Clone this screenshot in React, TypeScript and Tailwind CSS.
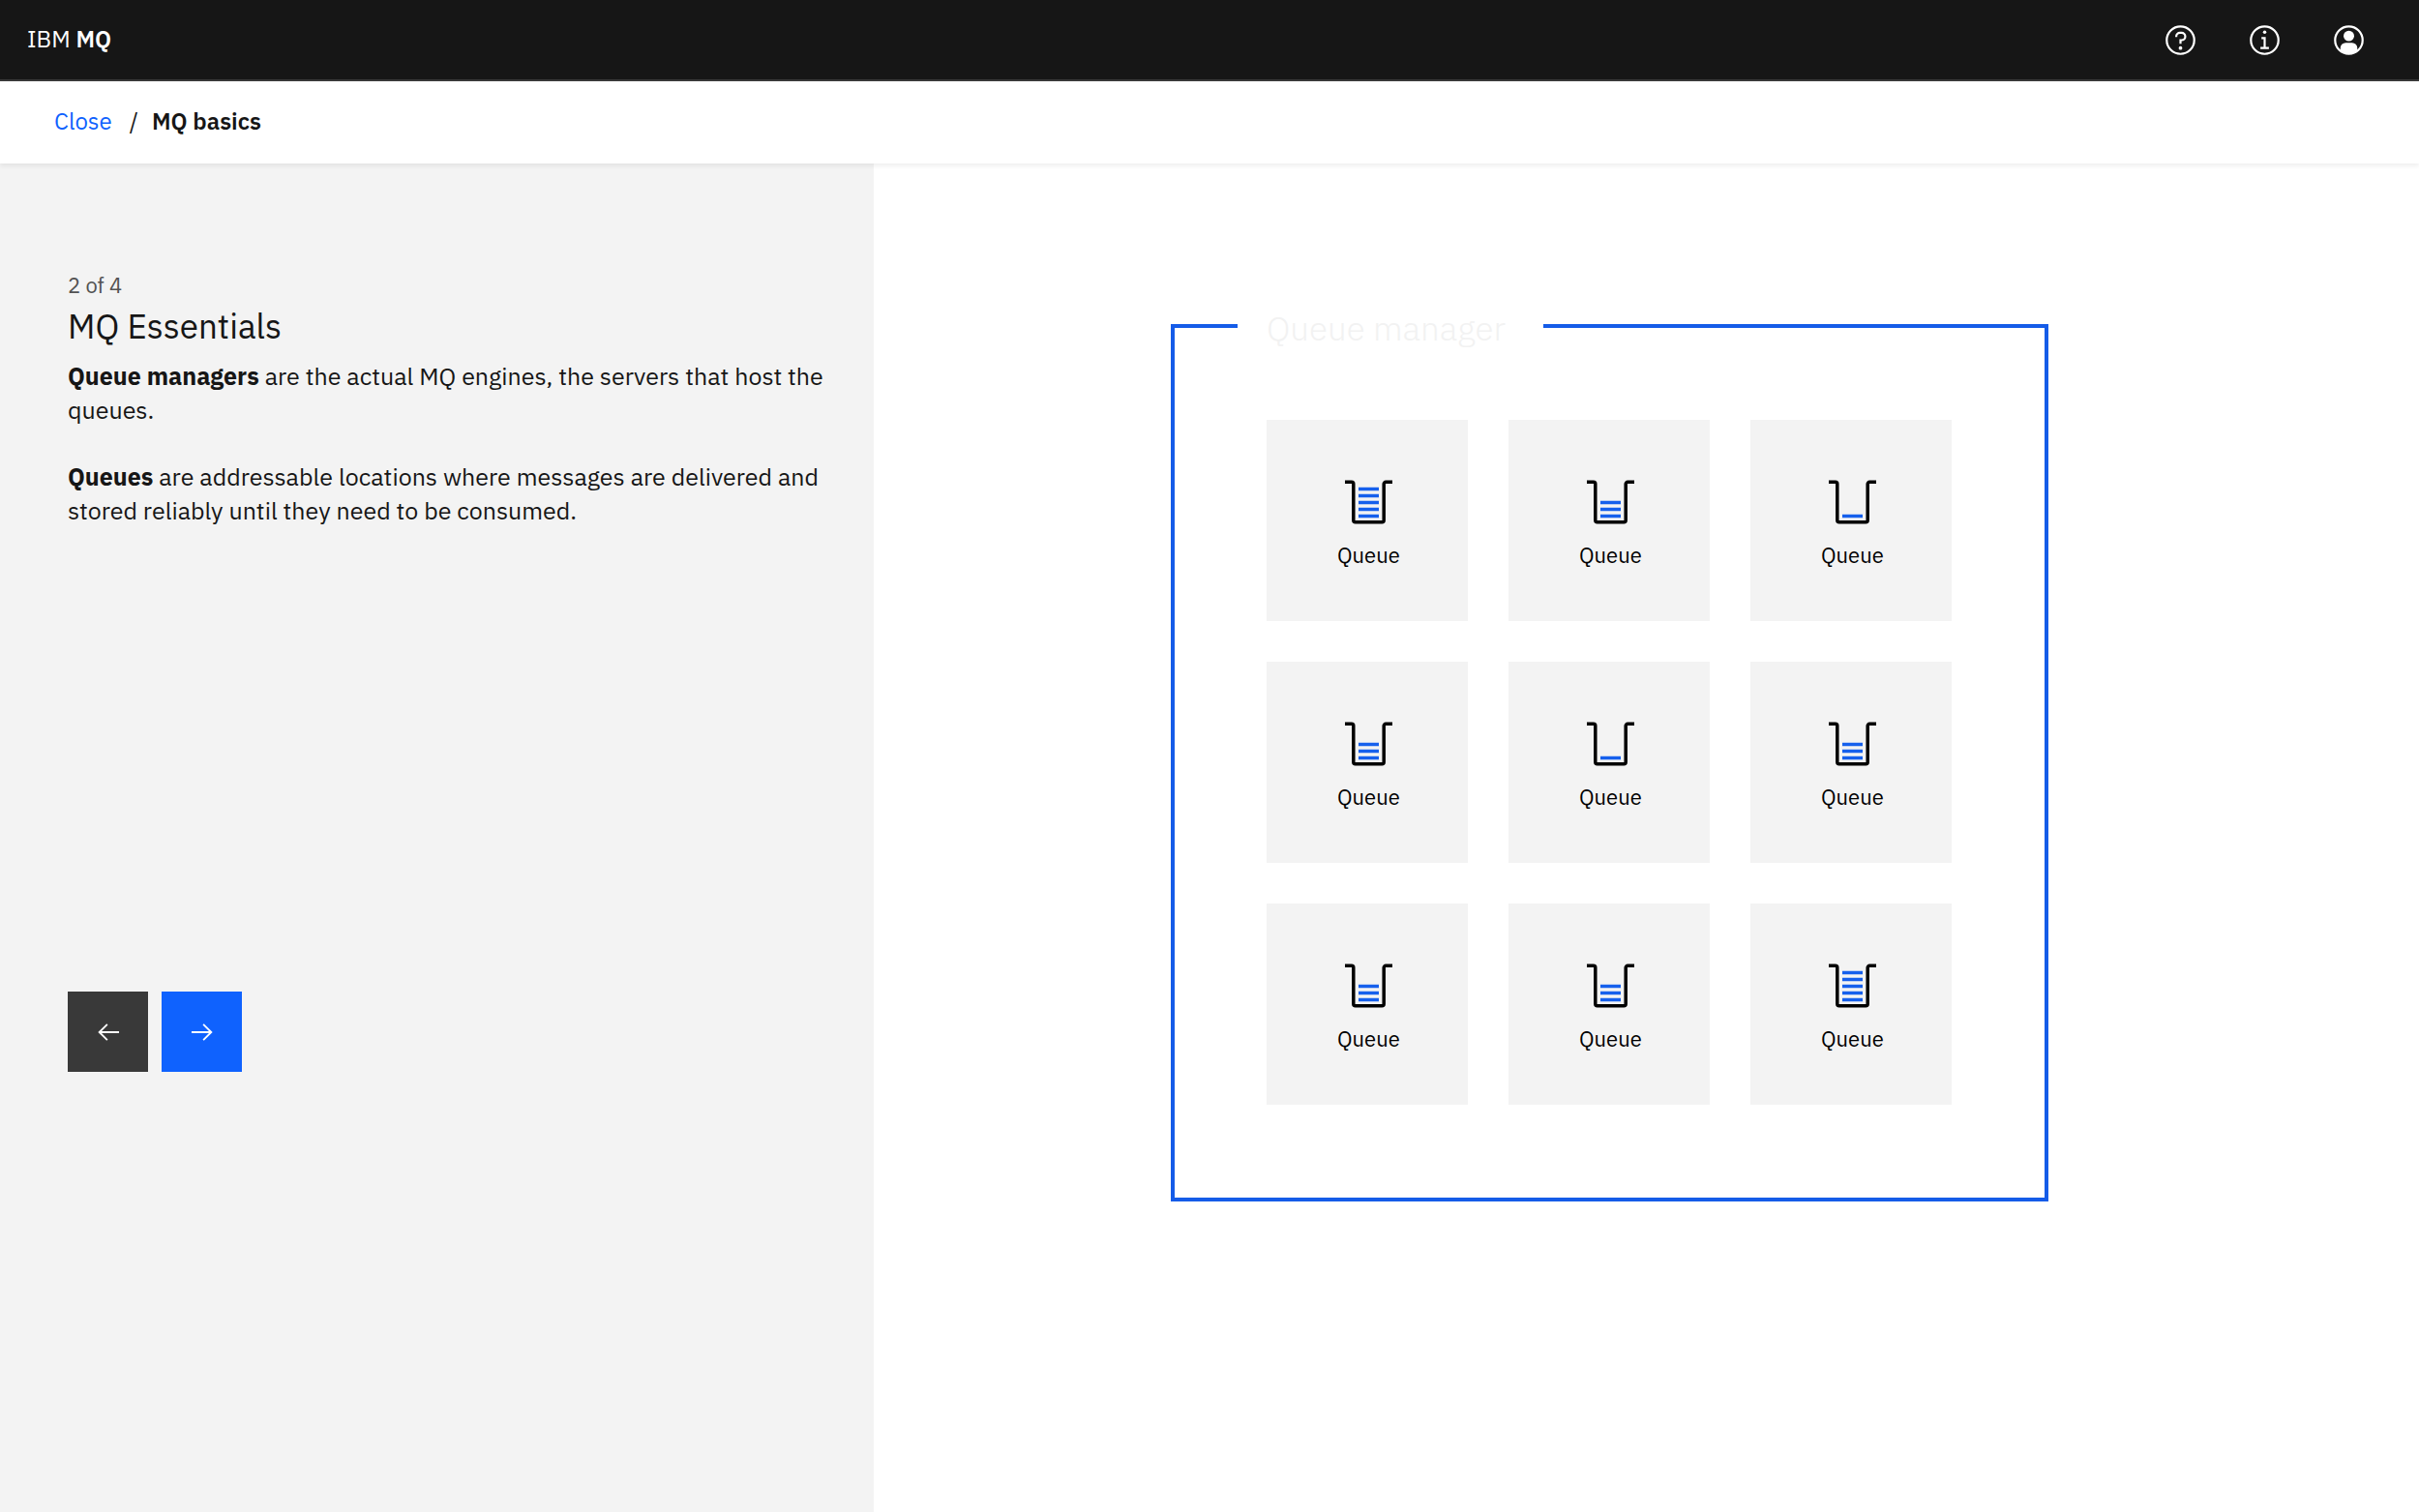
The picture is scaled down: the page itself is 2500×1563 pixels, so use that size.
import React from 'react';

interface IconProps {
  className?: string;
}

const HelpIcon: React.FC<IconProps> = ({ className }) => (
  <svg viewBox="0 0 32 32" fill="currentColor" className={className} aria-hidden="true">
    <circle cx="16" cy="16" r="13" fill="none" stroke="currentColor" strokeWidth="2" />
    <circle cx="16" cy="23.5" r="1.7" />
    <path d="M17 8h-1.5a4.49 4.49 0 0 0-4.5 4.5v.5h2v-.5a2.5 2.5 0 0 1 2.5-2.5H17a2.5 2.5 0 0 1 0 5h-2v4.5h2V17a4.5 4.5 0 0 0 0-9Z" />
  </svg>
);

const InfoIcon: React.FC<IconProps> = ({ className }) => (
  <svg viewBox="0 0 32 32" fill="currentColor" className={className} aria-hidden="true">
    <circle cx="16" cy="16" r="13" fill="none" stroke="currentColor" strokeWidth="2" />
    <circle cx="16" cy="8.5" r="1.6" />
    <path d="M17 22.5V13h-4v2h2v7.5h-3v2h8v-2h-3Z" />
  </svg>
);

const UserIcon: React.FC<IconProps> = ({ className }) => (
  <svg viewBox="0 0 32 32" fill="currentColor" className={className} aria-hidden="true">
    <circle cx="16" cy="16" r="13" fill="none" stroke="currentColor" strokeWidth="2" />
    <circle cx="16" cy="12" r="5" />
    <path d="M8 26v-2.5a5 5 0 0 1 5-5h6a5 5 0 0 1 5 5V26a13.5 13.5 0 0 1-16 0Z" />
  </svg>
);

const ArrowIcon: React.FC<IconProps> = ({ className }) => (
  <svg viewBox="0 0 32 32" fill="currentColor" className={className} aria-hidden="true">
    <path d="m18 6-1.43 1.39 7.4 7.51H3.4v2.2h20.57l-7.4 7.52L18 26l10.2-10Z" />
  </svg>
);

interface QueueTileProps {
  level: number;
}

const QueueTile: React.FC<QueueTileProps> = ({ level }) => (
  <div className="flex size-[208px] flex-col items-center bg-[#f3f3f3] pt-[62px] pl-[3px]">
    <svg viewBox="0 0 49 46" className="h-[46px] w-[49px]" fill="none" aria-hidden="true">
      <path
        d="M0 2.3h6.8a2 2 0 0 1 2 2v37.5a2 2 0 0 0 2 2h27.4a2 2 0 0 0 2-2V4.3a2 2 0 0 1 2-2H49"
        stroke="#000"
        strokeWidth="3.5"
      />
      {Array.from({ length: level }, (_, i) => (
        <path key={i} d={`M14 ${37.5 - i * 7}h21`} stroke="#1660ec" strokeWidth="3.5" />
      ))}
    </svg>
    <p className="mt-4 text-[22px] leading-8 text-black">Queue</p>
  </div>
);

// Number of messages drawn in each queue, row by row
const queueLevels = [5, 3, 1, 3, 1, 3, 3, 3, 5];

const App: React.FC = () => {
  return (
    <div className="flex min-h-screen flex-col bg-white font-['IBM_Plex_Sans','Roboto',sans-serif] text-2xl text-[#161616]">
      <header className="flex h-21 items-center justify-between border-b-2 border-[#393939] bg-[#161616] pr-[55px] pl-7 text-white">
        <p className="pb-0.5">
          IBM <span className="font-semibold">MQ</span>
        </p>
        <div className="flex gap-[52px]">
          <button aria-label="Help">
            <HelpIcon className="size-[35px]" />
          </button>
          <button aria-label="Information">
            <InfoIcon className="size-[35px]" />
          </button>
          <button aria-label="Account">
            <UserIcon className="size-[35px]" />
          </button>
        </div>
      </header>

      <nav className="relative flex h-[85px] items-center bg-white pb-1 pl-14 shadow-[0_3px_4px_rgba(0,0,0,0.06)]">
        <a href="#" className="text-[#0f62fe]">
          Close
        </a>
        <span className="mr-3.5 ml-[18px]">/</span>
        <span className="font-semibold">MQ basics</span>
      </nav>

      <main className="grid flex-1 grid-cols-[13fr_23fr]">
        <section className="bg-[#f3f3f3] pt-28 pr-10 pl-[70px]">
          <p className="text-[22px] leading-7 text-[#525252]">2 of 4</p>
          <h1 className="text-[35px] leading-[56px]">MQ Essentials</h1>
          <div className="mt-1.5 h-[654px] text-[25px] leading-[35px]">
            <p>
              <strong>Queue managers</strong> are the actual MQ engines, the servers that host the
              queues.
            </p>
            <p className="mt-[34px]">
              <strong>Queues</strong> are addressable locations where messages are delivered and
              stored reliably until they need to be consumed.
            </p>
          </div>
          <div className="flex gap-3.5">
            <button
              aria-label="Previous"
              className="flex size-[83px] items-center justify-center bg-[#393939] text-white"
            >
              <ArrowIcon className="size-7 rotate-180" />
            </button>
            <button
              aria-label="Next"
              className="flex size-[83px] items-center justify-center bg-[#0f62fe] text-white"
            >
              <ArrowIcon className="size-7" />
            </button>
          </div>
        </section>

        <section className="flex items-start justify-center pt-[166px] pr-19">
          <div className="relative grid grid-cols-3 gap-[42px] border-4 border-[#155ce8] pt-[95px] pr-24 pb-24 pl-[95px]">
            <h2 className="absolute -top-5 left-[65px] w-[316px] bg-white pl-[30px] text-[35px] leading-10 font-light text-[#f2f2f2]">
              Queue manager
            </h2>
            {queueLevels.map((level, index) => (
              <QueueTile key={index} level={level} />
            ))}
          </div>
        </section>
      </main>
    </div>
  );
};

export default App;
